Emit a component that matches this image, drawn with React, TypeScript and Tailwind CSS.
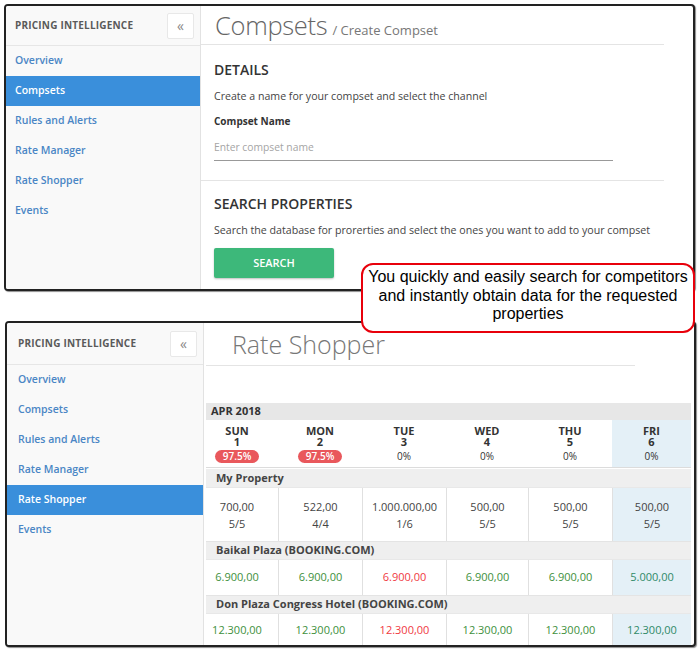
const navItems = ["Overview", "Compsets", "Rules and Alerts", "Rate Manager", "Rate Shopper", "Events"];

function Sidebar({ active, wide }: { active: string; wide?: boolean }) {
  return (
    <aside
      className={
        wide
          ? "w-[197px] shrink-0 bg-[#f9f9f9] border-r border-[#e2e2e2] flex flex-col"
          : "w-[195px] shrink-0 bg-[#f9f9f9] border-r border-[#e2e2e2] flex flex-col"
      }
    >
      <div
        className={
          wide
            ? "h-[42px] flex items-center justify-between pl-[11px] pr-[6px] border-b border-[#e6e6e6]"
            : "h-[40px] flex items-center justify-between pl-[9px] pr-[6px] border-b border-[#e6e6e6]"
        }
      >
        <span className="text-[10px] font-bold text-[#5a5a5a] tracking-[0.2px]">PRICING INTELLIGENCE</span>
        <button className="w-[27px] h-[26px] bg-white border border-[#e8e8e8] rounded-[2px] text-[#888] text-[14px] leading-none flex items-center justify-center">
          «
        </button>
      </div>
      <nav className="flex flex-col">
        {navItems.map((item) => (
          <a
            key={item}
            className={
              item === active
                ? "h-[30px] flex items-center px-[9px] bg-[#3a8fdb] text-white text-[10.5px] font-semibold"
                : "h-[30px] flex items-center px-[9px] text-[#4a86c5] text-[10.5px] font-semibold"
            }
          >
            <span className={wide ? "pl-[2px]" : ""}>{item}</span>
          </a>
        ))}
      </nav>
    </aside>
  );
}

function CompsetPanel() {
  return (
    <section className="ml-[4px] mt-[4px] w-[691px] h-[287px] border-2 border-[#222] rounded-[4px] shadow-[1px_1px_1px_rgba(0,0,0,0.45)] overflow-hidden flex bg-white">
      <Sidebar active="Compsets" />
      <main className="flex-1 pr-[29px]">
        <div className="h-[39px] border-b border-[#e4e4e4] pl-[14px] flex items-end pb-[6px] gap-[5px]">
          <h1 className="text-[25.5px] font-light text-[#666] leading-none tracking-[-0.3px]">Compsets</h1>
          <span className="text-[13px] text-[#777] leading-none pb-[1px]">/ Create Compset</span>
        </div>
        <div className="border-b border-[#e4e4e4] pl-[13px] pt-[15px] pb-[19px]">
          <h2 className="text-[14px] font-semibold text-[#333] leading-[20px]">DETAILS</h2>
          <p className="mt-[8px] text-[10.6px] text-[#444] leading-[16px]">
            Create a name for your compset and select the channel
          </p>
          <p className="mt-[9px] text-[10px] font-bold text-[#333] leading-[16px]">Compset Name</p>
          <input
            placeholder="Enter compset name"
            className="mt-[5px] w-[399px] h-[27px] border-b border-[#999] text-[10.3px] outline-none placeholder:text-[#a5a5a5] bg-transparent"
          />
        </div>
        <div className="pl-[13px] pt-[13px]">
          <h2 className="text-[14px] font-semibold text-[#333] leading-[20px]">SEARCH PROPERTIES</h2>
          <p className="mt-[8px] text-[10.65px] text-[#444] leading-[16px]">
            Search the database for prorerties and select the ones you want to add to your compset
          </p>
          <button className="mt-[10px] w-[120px] h-[30px] bg-[#3db87a] rounded-[2px] shadow-[0_1px_2px_rgba(0,0,0,0.25)] text-white text-[11px] font-semibold">
            SEARCH
          </button>
        </div>
      </main>
    </section>
  );
}

const days = [
  { d: "SUN", n: "1", occ: "97.5%", hot: true },
  { d: "MON", n: "2", occ: "97.5%", hot: true },
  { d: "TUE", n: "3", occ: "0%", hot: false },
  { d: "WED", n: "4", occ: "0%", hot: false },
  { d: "THU", n: "5", occ: "0%", hot: false },
  { d: "FRI", n: "6", occ: "0%", hot: false },
];

const myProperty = [
  ["700,00", "5/5"],
  ["522,00", "4/4"],
  ["1.000.000,00", "1/6"],
  ["500,00", "5/5"],
  ["500,00", "5/5"],
  ["500,00", "5/5"],
];

const competitors = [
  { name: "Baikal Plaza (BOOKING.COM)", rates: ["6.900,00", "6.900,00", "6.900,00", "6.900,00", "6.900,00", "5.000,00"], h: "h-[36px]" },
  { name: "Don Plaza Congress Hotel (BOOKING.COM)", rates: ["12.300,00", "12.300,00", "12.300,00", "12.300,00", "12.300,00", "12.300,00"], h: "h-[33px]" },
];

const grid = "grid grid-cols-[72px_84px_84px_82px_84px_79px]";

function cellClass(i: number) {
  if (i === 0) return "flex flex-col items-center justify-center pr-[10px]";
  if (i === 5) return "flex flex-col items-center justify-center border-l border-[#e0e0e0] bg-[#e4f0f7]";
  return "flex flex-col items-center justify-center border-l border-[#e0e0e0]";
}

function rateColor(i: number) {
  if (i === 2) return "text-[#f0393f]";
  if (i === 5) return "text-[#2f8a68]";
  return "text-[#3e903c]";
}

function RateShopperPanel() {
  return (
    <section className="ml-[5px] mt-[30px] w-[691px] h-[326px] border-2 border-[#222] rounded-[4px] shadow-[1px_1px_1px_rgba(0,0,0,0.45)] overflow-hidden flex bg-white">
      <Sidebar active="Rate Shopper" wide />
      <main className="flex-1">
        <div className="ml-[2px] w-[429px] h-[43px] border-b border-[#e4e4e4] pl-[26px] flex items-center">
          <h1 className="text-[25px] font-light text-[#777] leading-none">Rate Shopper</h1>
        </div>
        <div className="mt-[37px] ml-[2px] w-[485px] text-[#333]">
          <div className="h-[17px] bg-[#e7e7e7] pl-[5px] flex items-center text-[11px] font-bold">APR 2018</div>
          <div className={grid + " h-[48px] border-b border-[#dcdcdc]"}>
            {days.map((day, i) => (
              <div
                key={day.d}
                className={
                  i === 5
                    ? "flex flex-col items-center pt-[5px] bg-[#e4f0f7]"
                    : i === 0
                      ? "flex flex-col items-center pt-[5px] pr-[10px]"
                      : "flex flex-col items-center pt-[5px]"
                }
              >
                <span className="text-[11px] font-bold leading-[11px] text-center">
                  {day.d}
                  <br />
                  {day.n}
                </span>
                {day.hot ? (
                  <span className="mt-[3px] w-[44px] h-[13px] rounded-full bg-[#e9585c] text-white text-[10px] font-semibold leading-[13px] text-center">
                    {day.occ}
                  </span>
                ) : (
                  <span className="mt-[3px] h-[13px] text-[10px] leading-[13px] text-[#333]">{day.occ}</span>
                )}
              </div>
            ))}
          </div>
          <div className="h-[18px] mt-[1px] bg-[#efefef] pl-[10px] flex items-center text-[11px] font-bold text-[#444]">
            My Property
          </div>
          <div className={grid + " h-[54px] border-t border-[#e8e8e8]"}>
            {myProperty.map((v, i) => (
              <div key={i} className={cellClass(i) + " text-[11px] text-[#444] leading-[17px]"}>
                <span>{v[0]}</span>
                <span>{v[1]}</span>
              </div>
            ))}
          </div>
          {competitors.map((c) => (
            <div key={c.name}>
              <div className="h-[18px] bg-[#efefef] border-t border-[#e4e4e4] pl-[10px] flex items-center text-[11px] font-bold text-[#444]">
                {c.name}
              </div>
              <div className={grid + " " + c.h + " border-t border-[#e8e8e8]"}>
                {c.rates.map((r, i) => (
                  <div key={i} className={cellClass(i) + " text-[11px] " + rateColor(i)}>
                    {r}
                  </div>
                ))}
              </div>
            </div>
          ))}
        </div>
      </main>
    </section>
  );
}

export default function App() {
  return (
    <div className="relative w-[700px] h-[649px] bg-white overflow-hidden font-['Open_Sans',sans-serif]">
      <CompsetPanel />
      <RateShopperPanel />
      <div className="absolute left-[361px] top-[263px] w-[334px] h-[70px] border-2 border-[#e8000b] rounded-[12px] bg-white flex items-start justify-center pt-[3px]">
        <p className="font-['Liberation_Sans',Arial,sans-serif] text-[16px] leading-[18.5px] text-black text-center">
          You quickly and easily search for competitors
          <br />
          and instantly obtain data for the requested
          <br />
          properties
        </p>
      </div>
    </div>
  );
}
